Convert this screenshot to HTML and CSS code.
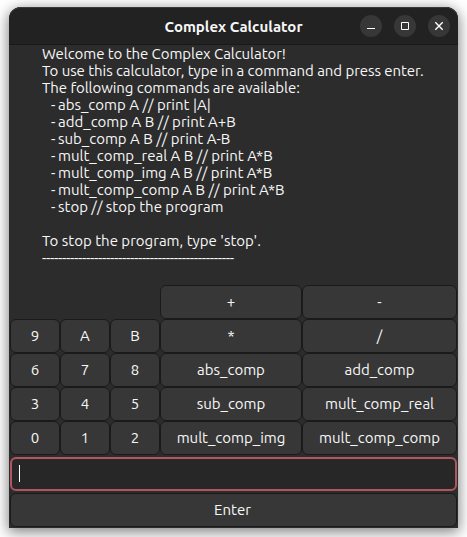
FILE: index.html
```html
<!DOCTYPE html>
<html lang="en">
<head>
<meta charset="utf-8">
<title>Complex Calculator</title>
<link rel="stylesheet" href="styles.css">
</head>
<body>
<main class="window">
  <header class="titlebar">
    <h1>Complex Calculator</h1>
    <div class="controls">
      <button class="control" aria-label="Minimize"><svg viewBox="0 0 22 22"><path d="M7 13.5h8"/></svg></button>
      <button class="control" aria-label="Maximize"><svg viewBox="0 0 22 22"><path d="M7.5 7.5h7v7h-7z"/></svg></button>
      <button class="control" aria-label="Close"><svg viewBox="0 0 22 22"><path class="cross" d="M7.3 7.3l7.4 7.4M14.7 7.3l-7.4 7.4"/></svg></button>
    </div>
  </header>
  <section class="help">
    <p class="lead">Welcome to the Complex Calculator!</p>
    <p class="lead">To use this calculator, type in a command and press enter.</p>
    <p class="lead">The following commands are available:</p>
    <ul>
      <li>abs_comp A // print |A|</li>
      <li>add_comp A B // print A+B</li>
      <li>sub_comp A B // print A-B</li>
      <li>mult_comp_real A B // print A*B</li>
      <li>mult_comp_img A B // print A*B</li>
      <li>mult_comp_comp A B // print A*B</li>
      <li>stop // stop the program</li>
    </ul>
    <p class="ending">To stop the program, type 'stop'.</p>
    <p class="rule">------------------------------------------------</p>
  </section>
  <section class="keypad">
    <button class="plus">+</button><button>-</button>
    <button>9</button><button>A</button><button>B</button><button>*</button><button>/</button>
    <button>6</button><button>7</button><button>8</button><button>abs_comp</button><button>add_comp</button>
    <button>3</button><button>4</button><button>5</button><button>sub_comp</button><button>mult_comp_real</button>
    <button>0</button><button>1</button><button>2</button><button>mult_comp_img</button><button>mult_comp_comp</button>
  </section>
  <div class="entry"><span class="caret"></span></div>
  <button class="enter">Enter</button>
</main>
</body>
</html>
```
FILE: styles.css
```css
* { box-sizing: border-box; }
body {
  margin: 0;
  height: 537px;
  padding: 7px 9px 9px;
  overflow: hidden;
  background: #fff;
  color: #f7f7f7;
  font: 15px/17px "Ubuntu", "Noto Sans", sans-serif;
}
.window {
  display: flex;
  flex-direction: column;
  width: 449px;
  height: 521px;
  padding: 0 1px 1px;
  background: #2c2c2c;
  border-radius: 12px 12px 0 0;
  box-shadow: 0 3px 14px 1px rgba(0, 0, 0, .5);
}
.titlebar {
  display: grid;
  grid-template-columns: 1fr auto 1fr;
  align-items: center;
  height: 38px;
  margin: 0 -1px;
  padding: 1px 8px 0;
  background: #222;
  border-bottom: 1px solid #191919;
  border-radius: 12px 12px 0 0;
  box-shadow: inset 0 1px #3a3a3a;
}
h1 {
  grid-column: 2;
  margin: 0;
  padding-top: 2px;
  font-size: 15px;
  line-height: 20px;
  font-weight: 700;
}
.controls { display: flex; justify-content: flex-end; gap: 12px; }
button {
  margin: 0;
  padding: 0 0 2px;
  color: inherit;
  font: inherit;
  background: #373737;
  border: 1px solid #1a1a1a;
  border-radius: 6px;
}
.control { width: 22px; height: 22px; padding: 0; border: 0; border-radius: 50%; }
.control svg { display: block; fill: none; stroke: #fff; }
.control .cross { stroke-width: 1.4; }
.help { height: 240px; padding-left: 32px; white-space: nowrap; }
p, ul { margin: 0; padding: 0; }
p, li { height: 17px; }
ul { list-style: none; padding-left: 9px; }
li::before { content: "-"; display: inline-block; width: 7px; }
.lead { letter-spacing: -.06px; }
.ending { margin-top: 17px; }
.rule { letter-spacing: -.34px; }
.keypad {
  display: grid;
  grid-template-columns: 50px 50px 50px 142px 155px;
  grid-auto-rows: 34px;
}
.plus { grid-column: 4; }
.entry {
  height: 34px;
  margin: 2px 0;
  padding: 6px 7px;
  background: #272727;
  border: 2px solid #b05663;
  border-radius: 6px;
}
.caret { display: block; width: 1px; height: 17px; background: #fff; }
.enter { height: 34px; padding-right: 2px; }
```
